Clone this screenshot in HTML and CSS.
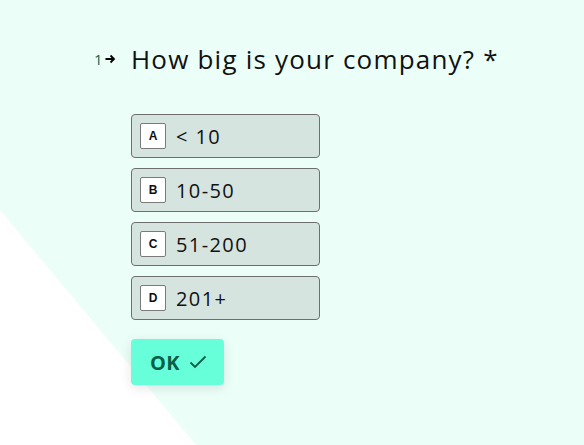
FILE: index.html
```html
<!DOCTYPE html>
<html>
<head>
<meta charset="utf-8">
<link rel="stylesheet" href="styles.css">
</head>
<body>
<div class="bg-shape"></div>
<main class="form">
  <h1 class="question">
    <span class="qnum">1<svg class="arrow" width="11" height="10" viewBox="0 0 11 10"><path d="M0.5 5H9M5.5 1.5L9 5L5.5 8.5" fill="none" stroke="#000" stroke-width="1.8"/></svg></span>
    <span class="qtext">How big is your company? *</span>
  </h1>
  <div class="options">
    <div class="option"><span class="key">A</span><span class="label">&lt; 10</span></div>
    <div class="option"><span class="key">B</span><span class="label">10-50</span></div>
    <div class="option"><span class="key">C</span><span class="label">51-200</span></div>
    <div class="option"><span class="key">D</span><span class="label">201+</span></div>
  </div>
  <button class="ok">OK <svg width="18" height="14" viewBox="0 0 18 14"><path d="M1.5 7.5L6 12L16.5 1.5" fill="none" stroke="#0b5e47" stroke-width="1.8"/></svg></button>
</main>
</body>
</html>
```
FILE: styles.css
```css
html, body {
  margin: 0;
  height: 100%;
}
body {
  background: #ebfff8;
  font-family: "Open Sans", "DejaVu Sans", sans-serif;
  color: #0e0e0e;
  position: relative;
  overflow: hidden;
}
.bg-shape {
  position: absolute;
  inset: 0;
  background: #ffffff;
  clip-path: polygon(0 210px, 196px 445px, 0 445px);
}
.form {
  position: relative;
  padding: 40px 0 0 131px;
}
.question {
  display: flex;
  align-items: center;
  margin: 0;
  font-weight: 400;
  font-size: 26px;
  line-height: 38px;
}
.qnum {
  display: flex;
  align-items: center;
  gap: 2px;
  width: 37px;
  margin-left: -37px;
  font-size: 15px;
  color: #0b6b50;
}
.arrow { display: block; }
.qtext {
  letter-spacing: 1.2px;
  color: #111;
}
.options {
  display: flex;
  flex-direction: column;
  gap: 10px;
  margin-top: 36px;
}
.option {
  box-sizing: border-box;
  width: 189px;
  height: 44px;
  display: flex;
  align-items: center;
  padding-left: 8px;
  gap: 10px;
  background: #d6e4df;
  border: 1px solid #6e6e6e;
  border-radius: 4px;
}
.key {
  box-sizing: border-box;
  width: 26px;
  height: 26px;
  display: flex;
  align-items: center;
  justify-content: center;
  background: #fff;
  border: 1px solid #7a7a7a;
  border-radius: 2px;
  font-size: 12px;
  font-weight: 700;
  font-family: "Liberation Sans", sans-serif;
}
.label {
  font-size: 20px;
  letter-spacing: 1.4px;
  color: #111;
}
.ok {
  margin-top: 19px;
  width: 93px;
  height: 46px;
  display: flex;
  align-items: center;
  justify-content: center;
  gap: 9px;
  background: #66ffd9;
  border: none;
  border-radius: 4px;
  box-shadow: 0 3px 12px rgba(0,0,0,0.1);
  font-family: "Open Sans", sans-serif;
  font-size: 20px;
  font-weight: 700;
  letter-spacing: 0.5px;
  color: #0b5e47;
  padding: 0 0 0 2px;
}
```
